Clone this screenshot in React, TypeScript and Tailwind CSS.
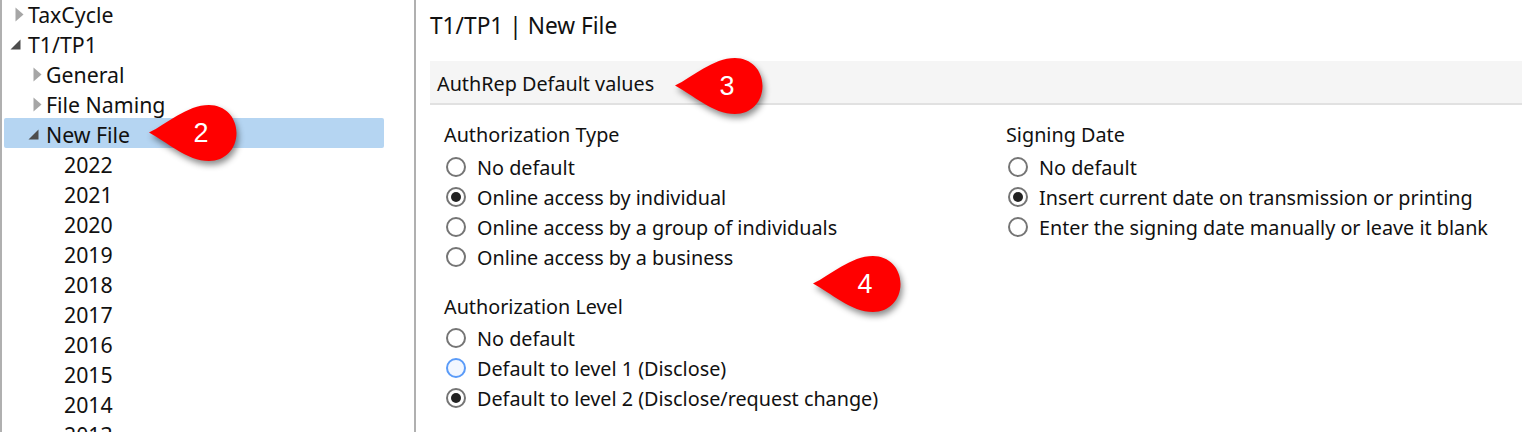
const fontStack = "font-['Noto_Sans',sans-serif]";

interface TreeRowProps {
  label: string;
  indent: number;
  arrow?: "closed" | "open";
  selected?: boolean;
}

const TreeRow = ({ label, indent, arrow, selected }: TreeRowProps) => {
  return (
    <div
      className={`flex h-[30px] items-center ${selected ? "bg-[#b5d5f2] rounded-[2px]" : ""}`}
      style={{ paddingLeft: indent }}
    >
      <span className="flex w-[19px] shrink-0 items-center justify-start">
        {arrow === "closed" && (
          <svg className="ml-[6px] mt-[2px]" width="9" height="15" viewBox="0 0 9 15">
            <path d="M0.5 0.5 L8.5 7.5 L0.5 14.5 Z" fill="#a6a6a6" />
          </svg>
        )}
        {arrow === "open" && (
          <svg className="ml-[1px] mt-[2px]" width="11" height="11" viewBox="0 0 11 11">
            <path d="M10.5 0.5 L10.5 10.5 L0.5 10.5 Z" fill="#4d4d4d" />
          </svg>
        )}
      </span>
      <span className="pt-[3px] text-[21.3px] leading-none text-[#111]">{label}</span>
    </div>
  );
};

const Radio = ({ label, checked, focused }: { label: string; checked?: boolean; focused?: boolean }) => {
  return (
    <div className="flex h-[30px] items-center">
      <span
        className={`flex h-[20px] w-[20px] shrink-0 items-center justify-center rounded-full border-2 ${
          focused ? "border-[#5a9bf8] bg-[#f2f7ff]" : "border-[#757575] bg-white"
        }`}
      >
        {checked && <span className="h-[10px] w-[10px] rounded-full bg-[#222]"></span>}
      </span>
      <span className="ml-[11px] whitespace-nowrap pt-[2px] text-[19.8px] leading-none text-[#111]">{label}</span>
    </div>
  );
};

const Callout = ({ num, className }: { num: string; className: string }) => {
  return (
    <div className={`absolute h-[56px] w-[88px] ${className}`}>
      <svg
        className="absolute inset-0 drop-shadow-[2px_4px_3px_rgba(0,0,0,0.45)]"
        width="88"
        height="56"
        viewBox="0 0 88 56"
      >
        <path
          d="M0 27.5 C18 19 38 0 60 0 C76 0 87.500 12 87.500 28 C87.500 44 76 56 60 56 C38 56 18 37 0 27.500 Z"
          fill="#ff0000"
        />
      </svg>
      <span className="absolute left-[38px] top-0 flex h-[56px] w-[28px] items-center justify-center font-['Liberation_Sans',sans-serif] text-[27px] leading-none text-white">
        {num}
      </span>
    </div>
  );
};

const App = () => {
  const years = ["2022", "2021", "2020", "2019", "2018", "2017", "2016", "2015", "2014", "2013"];

  return (
    <div className={`relative flex h-[432px] w-[1522px] overflow-hidden bg-white ${fontStack}`}>
      {/* Tree panel */}
      <div className="h-full w-[416px] shrink-0 overflow-hidden border-l-2 border-r-2 border-[#b0b0b0] pl-[2px] pr-[30px]">
        <div className="-mt-[2px]">
          <TreeRow label="TaxCycle" indent={5} arrow="closed" />
          <TreeRow label="T1/TP1" indent={5} arrow="open" />
          <TreeRow label="General" indent={23} arrow="closed" />
          <TreeRow label="File Naming" indent={23} arrow="closed" />
          <TreeRow label="New File" indent={23} arrow="open" selected />
          {years.map((y) => (
            <TreeRow key={y} label={y} indent={41} />
          ))}
        </div>
      </div>

      {/* Settings panel */}
      <div className="min-w-0 flex-1 pl-[14px]">
        <div className="flex h-[52px] items-center text-[22.7px] leading-none text-[#111]">T1/TP1 | New File</div>
        <div className="mt-[9px] flex h-[44px] items-center border-b-2 border-[#e1e1e1] bg-[#f5f5f5] pl-[7px] pt-[3px] text-[19.8px] leading-none text-[#111]">
          AuthRep Default values
        </div>
        <div className="mt-[16px] grid grid-cols-[562px_1fr] pl-[14px]">
          <div>
            <div className="flex h-[30px] items-center pb-[2px] text-[19.8px] leading-none text-[#111]">Authorization Type</div>
            <div className="mt-[1px] pl-[2px]">
              <Radio label="No default" />
              <Radio label="Online access by individual" checked />
              <Radio label="Online access by a group of individuals" />
              <Radio label="Online access by a business" />
            </div>
            <div className="mt-[21px] flex h-[30px] items-center pb-[2px] text-[19.8px] leading-none text-[#111]">
              Authorization Level
            </div>
            <div className="pl-[2px]">
              <Radio label="No default" />
              <Radio label="Default to level 1 (Disclose)" focused />
              <Radio label="Default to level 2 (Disclose/request change)" checked />
            </div>
          </div>
          <div>
            <div className="flex h-[30px] items-center pb-[2px] text-[19.8px] leading-none text-[#111]">Signing Date</div>
            <div className="mt-[1px] pl-[2px]">
              <Radio label="No default" />
              <Radio label="Insert current date on transmission or printing" checked />
              <Radio label="Enter the signing date manually or leave it blank" />
            </div>
          </div>
        </div>
      </div>

      <Callout num="2" className="left-[149px] top-[105px]" />
      <Callout num="3" className="left-[675px] top-[58px]" />
      <Callout num="4" className="left-[813px] top-[256px]" />
    </div>
  );
};

export default App;
